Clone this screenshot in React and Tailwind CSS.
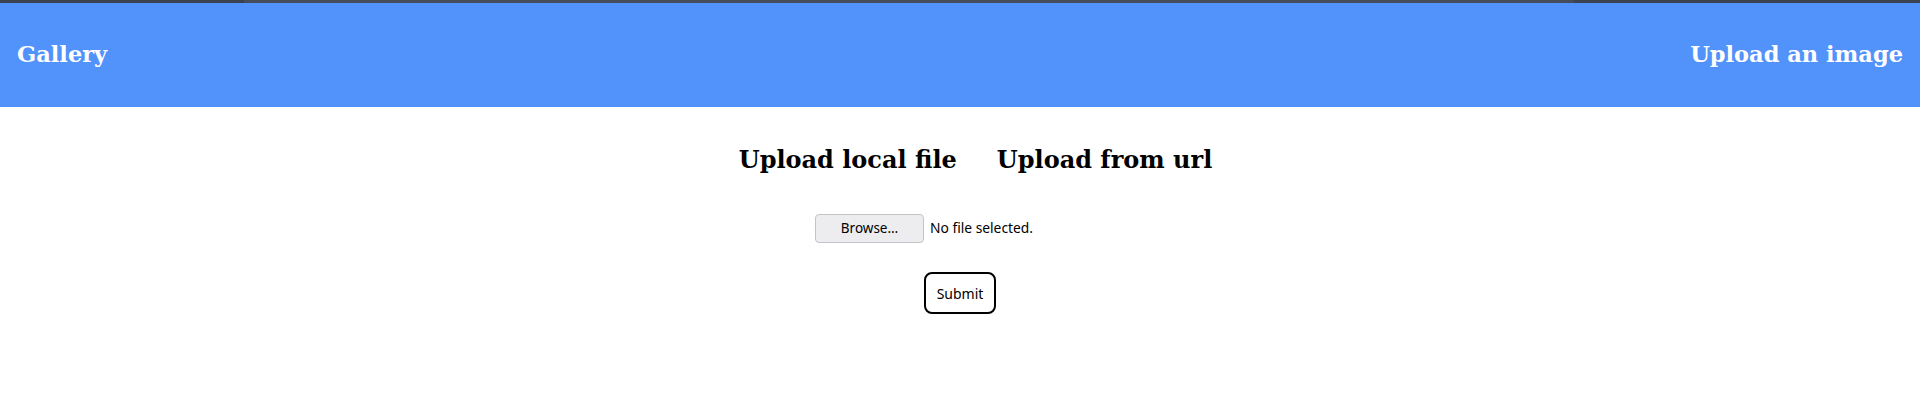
import React from "react";

const App = () => {
    return (
        <div className="w-[1920px] h-[408px] bg-white overflow-hidden">
            {/* thin window strip above the header */}
            <div className="flex h-[3px] bg-[#3b4252]">
                <div className="w-[244px]" />
                <div className="w-[1330px] bg-[#454d5c]" />
            </div>

            <header className="h-[104px] bg-[#5292fb] flex items-center justify-between px-[17px] font-['DejaVu_Serif',serif] font-bold text-white text-[22.5px]">
                <a href="#">Gallery</a>
                <a href="#">Upload an image</a>
            </header>

            <main className="flex flex-col items-center">
                <div className="flex gap-[40px] mt-[39px] pl-[31px] font-['DejaVu_Serif',serif] font-bold text-black text-[24px] leading-[28px]">
                    <button>Upload local file</button>
                    <button>Upload from url</button>
                </div>

                <form className="flex flex-col items-center">
                    <div className="w-[290px] mt-[40px] flex items-center gap-[6px] font-['Noto_Sans',sans-serif] text-[13.5px] text-black">
                        <span className="w-[109px] h-[29px] flex items-center justify-center rounded-[4px] border border-[#c4c4c8] bg-[#ededf0]">
                            Browse…
                        </span>
                        <span className="text-[13.8px]">No file selected.</span>
                    </div>

                    <button
                        type="button"
                        className="mt-[29px] w-[72px] h-[42px] rounded-[8px] border-2 border-black bg-white font-['Noto_Sans',sans-serif] text-[14px] text-black"
                    >
                        Submit
                    </button>
                </form>
            </main>
        </div>
    );
};

export default App;
